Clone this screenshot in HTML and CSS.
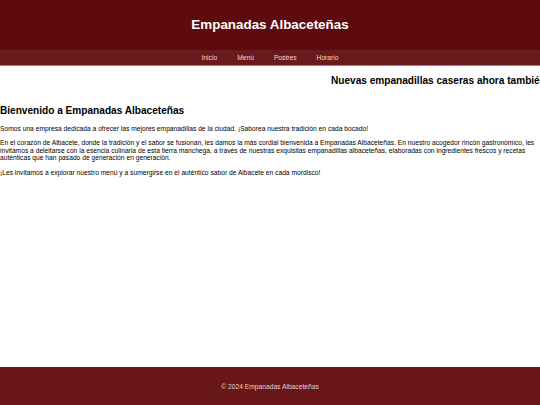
FILE: index.html
```html
<!DOCTYPE html>
<html lang="es">
<head>
<meta charset="utf-8">
<title>Empanadas Albaceteñas</title>
<link rel="stylesheet" href="styles.css">
</head>
<body>
<header class="site-header">
  <h1 class="site-title">Empanadas Albaceteñas</h1>
</header>
<nav class="site-nav">
  <a href="#">Inicio</a>
  <a href="#">Menú</a>
  <a href="#">Postres</a>
  <a href="#">Horario</a>
</nav>
<main class="content">
  <div class="ticker"><span class="ticker-text">Nuevas empanadillas caseras ahora también disponibles para llevar</span></div>
  <h2 class="welcome">Bienvenido a Empanadas Albaceteñas</h2>
  <p>Somos una empresa dedicada a ofrecer las mejores empanadillas de la ciudad. ¡Saborea nuestra tradición en cada bocado!</p>
  <p>En el corazón de Albacete, donde la tradición y el sabor se fusionan, les damos la más cordial bienvenida a Empanadas Albaceteñas. En nuestro acogedor rincón gastronómico, les invitamos a deleitarse con la esencia culinaria de esta tierra manchega, a través de nuestras exquisitas empanadillas albaceteñas, elaboradas con ingredientes frescos y recetas auténticas que han pasado de generación en generación.</p>
  <p>¡Les invitamos a explorar nuestro menú y a sumergirse en el auténtico sabor de Albacete en cada mordisco!</p>
</main>
<footer class="site-footer">© 2024 Empanadas Albaceteñas</footer>
</body>
</html>
```

FILE: styles.css
```css
html, body {
  margin: 0;
  padding: 0;
}
body {
  font-family: "Liberation Sans", Arial, sans-serif;
  font-size: 6.7px;
  color: #000;
  background: #fff;
  min-height: 100vh;
  display: flex;
  flex-direction: column;
}
.site-header {
  background: #5d0b0f;
  height: 50px;
  display: flex;
  align-items: center;
  justify-content: center;
}
.site-title {
  margin: 0;
  color: #fff;
  font-size: 13.4px;
  font-weight: bold;
  line-height: 16px;
}
.site-nav {
  background: #6a191c;
  height: 15px;
  border-bottom: 1px solid #a87c7e;
  display: flex;
  justify-content: center;
  align-items: center;
  gap: 0;
}
.site-nav a {
  color: #ecd6d6;
  text-decoration: none;
  padding: 0 10px;
  font-size: 6.7px;
}
.content {
  flex: 1;
}
.ticker {
  margin-top: 9px;
  overflow: hidden;
  white-space: nowrap;
  padding-left: 331px;
  font-size: 10.1px;
  font-weight: bold;
  line-height: 12px;
}
.welcome {
  margin: 18px 0 8px;
  font-size: 10.1px;
  line-height: 12px;
  font-weight: bold;
}
.content p {
  margin: 0 0 6.7px;
  line-height: 7.6px;
}
.site-footer {
  background: #6a1719;
  color: #e6cfcf;
  height: 38px;
  display: flex;
  align-items: center;
  justify-content: center;
  font-size: 6.7px;
}
```
